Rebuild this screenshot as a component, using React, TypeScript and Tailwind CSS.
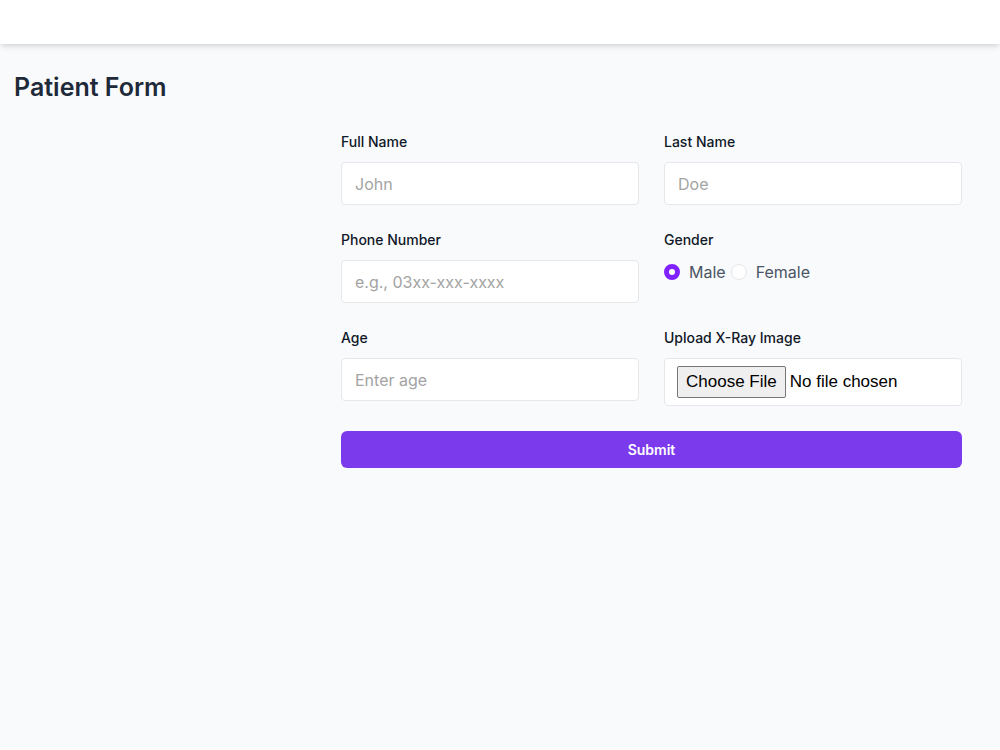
import { useState } from 'react';

export default function App() {
  const [gender, setGender] = useState('male');

  const inputCls =
    'w-full h-[43px] px-[13px] bg-white border border-gray-200 rounded-[4px] text-base text-gray-900 placeholder:text-[#a3a3a3] outline-none';

  return (
    <div className="min-h-screen bg-gray-50 font-['Inter',sans-serif]">
      <header className="h-[44px] bg-white shadow-md" />

      <main className="px-[14px] pt-[27px]">
        <h1 className="text-[25px] leading-[32px] font-semibold text-gray-800">Patient Form</h1>

        <div className="flex justify-end pr-[24px] mt-[29px]">
          <form className="w-[621px]" onSubmit={e => e.preventDefault()}>
            <div className="grid grid-cols-2 gap-x-[25px] gap-y-[25px]">
              <div>
                <label className="block mb-[10px] text-sm font-medium text-gray-900">Full Name</label>
                <input className={inputCls} placeholder="John" />
              </div>
              <div>
                <label className="block mb-[10px] text-sm font-medium text-gray-900">Last Name</label>
                <input className={inputCls} placeholder="Doe" />
              </div>

              <div>
                <label className="block mb-[10px] text-sm font-medium text-gray-900">Phone Number</label>
                <input className={inputCls} placeholder="e.g., 03xx-xxx-xxxx" />
              </div>
              <div>
                <label className="block mb-[10px] text-sm font-medium text-gray-900">Gender</label>
                <div className="flex items-center h-6 text-base text-gray-600">
                  <input
                    type="radio"
                    name="gender"
                    checked={gender === 'male'}
                    onChange={() => setGender('male')}
                    className="appearance-none w-4 h-4 rounded-full bg-white border border-gray-200 checked:border-[5px] checked:border-violet-600"
                  />
                  <span className="ml-[9px]">Male</span>
                  <input
                    type="radio"
                    name="gender"
                    checked={gender === 'female'}
                    onChange={() => setGender('female')}
                    className="appearance-none w-4 h-4 rounded-full bg-white border border-gray-200 checked:border-[5px] checked:border-violet-600 ml-[5px]"
                  />
                  <span className="ml-[9px]">Female</span>
                </div>
              </div>

              <div>
                <label className="block mb-[10px] text-sm font-medium text-gray-900">Age</label>
                <input className={inputCls} placeholder="Enter age" />
              </div>
              <div>
                <label className="block mb-[10px] text-sm font-medium text-gray-900">Upload X-Ray Image</label>
                <div className="flex items-center h-[48px] px-3 bg-white border border-gray-200 rounded-[4px]">
                  <input
                    type="file"
                    className="w-full text-[17px] text-black font-['Liberation_Sans',Arial,sans-serif] file:mr-1 file:px-2 file:py-[2px] file:bg-[#efefef] file:border file:border-[#767676] file:rounded-[2px] file:text-black"
                  />
                </div>
              </div>
            </div>

            <button
              type="submit"
              className="mt-[25px] w-full h-[37px] rounded-md bg-[#7c3aed] text-white text-sm font-semibold"
            >
              Submit
            </button>
          </form>
        </div>
      </main>
    </div>
  );
}
